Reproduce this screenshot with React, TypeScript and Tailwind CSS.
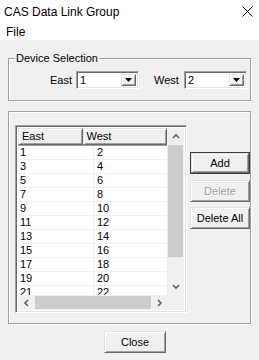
import React from 'react';

const rows = Array.from({ length: 11 }, (_, i) => [String(i * 2 + 1), String(i * 2 + 2)]);

const raised =
  'border-t border-l border-r border-b border-t-[#e3e3e3] border-l-[#e3e3e3] border-r-[#696969] border-b-[#696969] shadow-[inset_1px_1px_0_#fff,inset_-1px_-1px_0_#a0a0a0]';
const sunken =
  'border-t border-l border-r border-b border-t-[#a0a0a0] border-l-[#a0a0a0] border-r-white border-b-white shadow-[inset_1px_1px_0_#696969,inset_-1px_-1px_0_#e3e3e3]';

const Chevron: React.FC<{ dir: 'up' | 'down' | 'left' | 'right' }> = ({ dir }) => {
  const pts = {
    up: '1,5 4,2 7,5',
    down: '1,2 4,5 7,2',
    left: '5,1 2,4 5,7',
    right: '3,1 6,4 3,7',
  }[dir];
  return (
    <svg width="8" height="8" viewBox="0 0 8 8">
      <polyline points={pts} fill="none" stroke="#606060" strokeWidth="1.6" />
    </svg>
  );
};

const Combo: React.FC<{ value: string }> = ({ value }) => (
  <div className={`w-[63px] h-[18px] bg-white flex items-stretch p-[2px] ${sunken}`}>
    <div className="flex-1 pl-[1px] leading-[13px] text-[11px]">{value}</div>
    <div className={`w-[15px] bg-[#f0f0f0] flex items-center justify-center ${raised}`}>
      <svg width="7" height="4" viewBox="0 0 7 4">
        <polygon points="0,0 7,0 3.5,4" fill="#000" />
      </svg>
    </div>
  </div>
);

const Btn: React.FC<{ label: string; disabled?: boolean; isDefault?: boolean; className?: string }> = ({
  label,
  disabled,
  isDefault,
  className = '',
}) =>
  isDefault ? (
    <div className={`h-[22px] border border-[#3c3c3c] flex ${className}`}>
      <div className={`flex-1 bg-[#f0f0f0] flex items-center justify-center text-[11px] ${raised}`}>{label}</div>
    </div>
  ) : (
    <div
      className={`h-[22px] bg-[#f0f0f0] flex items-center justify-center text-[11px] ${raised} ${
        disabled ? 'text-[#a0a0a0] [text-shadow:1px_1px_0_#fff]' : ''
      } ${className}`}
    >
      {label}
    </div>
  );

export default function App() {
  return (
    <div className="w-[259px] h-[360px] bg-white flex flex-col font-['Liberation_Sans',Arial,sans-serif] text-black overflow-hidden">
      {/* title bar */}
      <div className="h-[23px] flex items-center justify-between pl-[4px] pr-[6px] text-[12px]">
        <span>CAS Data Link Group</span>
        <svg width="11" height="11" viewBox="0 0 11 11">
          <path d="M0.5 0.5 L10.5 10.5 M10.5 0.5 L0.5 10.5" stroke="#000" strokeWidth="1" />
        </svg>
      </div>

      {/* menu */}
      <div className="h-[17px] flex items-center pl-[6px] text-[12px]">File</div>

      {/* client */}
      <div className="flex-1 bg-[#f0f0f0] px-[8px] pt-[18px] flex flex-col text-[11px]">
        {/* device selection */}
        <div className="relative h-[43px] border border-[#a0a0a0] shadow-[inset_1px_1px_0_#fff,1px_1px_0_#fff] flex items-start pt-[12px] pl-[41px]">
          <span className="absolute left-[6px] -top-[8px] px-[1px] bg-[#f0f0f0] leading-[14px]">Device Selection</span>
          <span className="leading-[18px]">East</span>
          <div className="ml-[4px]">
            <Combo value="1" />
          </div>
          <span className="ml-[15px] leading-[18px]">West</span>
          <div className="ml-[5px]">
            <Combo value="2" />
          </div>
        </div>

        {/* list group */}
        <div className="mt-[10px] h-[213px] border border-[#a0a0a0] shadow-[inset_1px_1px_0_#fff,1px_1px_0_#fff] flex items-start pt-[13px] pl-[6px]">
          <div className={`w-[172px] h-[188px] bg-white flex flex-col p-[2px] ${sunken}`}>
            <div className="flex h-[167px]">
              <div className="w-[151px] overflow-hidden flex flex-col">
                <div className="h-[18px] flex bg-[#f0f0f0] border-b border-[#a0a0a0] shrink-0">
                  <div className={`w-[76px] pl-[3px] flex items-center ${raised}`}>East</div>
                  <div className={`w-[100px] pl-[3px] flex items-center ${raised}`}>West</div>
                </div>
                {rows.map(([e, w]) => (
                  <div key={e} className="h-[14px] flex border-b border-[#f0f0f0] shrink-0 leading-[13px]">
                    <div className="w-[76px] pl-[2px] border-r border-[#f0f0f0]">{e}</div>
                    <div className="flex-1 pl-[3px]">{w}</div>
                  </div>
                ))}
              </div>
              <div className="w-[17px] bg-[#f0f0f0] flex flex-col">
                <div className="h-[17px] flex items-center justify-center">
                  <Chevron dir="up" />
                </div>
                <div className="h-[112px] bg-[#cdcdcd] mx-[1px]" />
                <div className="flex-1" />
                <div className="h-[17px] flex items-center justify-center">
                  <Chevron dir="down" />
                </div>
              </div>
            </div>
            <div className="flex h-[17px]">
              <div className="w-[151px] bg-[#f0f0f0] flex">
                <div className="w-[17px] flex items-center justify-center">
                  <Chevron dir="left" />
                </div>
                <div className="w-[116px] bg-[#cdcdcd] my-[1px]" />
                <div className="flex-1 flex items-center justify-center">
                  <Chevron dir="right" />
                </div>
              </div>
              <div className="w-[17px] bg-[#f0f0f0]" />
            </div>
          </div>

          <div className="ml-[3px] mt-[27px] w-[61px] flex flex-col">
            <Btn label="Add" isDefault />
            <Btn label="Delete" disabled className="mt-[6px]" />
            <Btn label="Delete All" className="mt-[5px]" />
          </div>
        </div>

        <div className="mt-[7px] ml-[96px]">
          <Btn label="Close" className="w-[62px]" />
        </div>
      </div>
    </div>
  );
}
